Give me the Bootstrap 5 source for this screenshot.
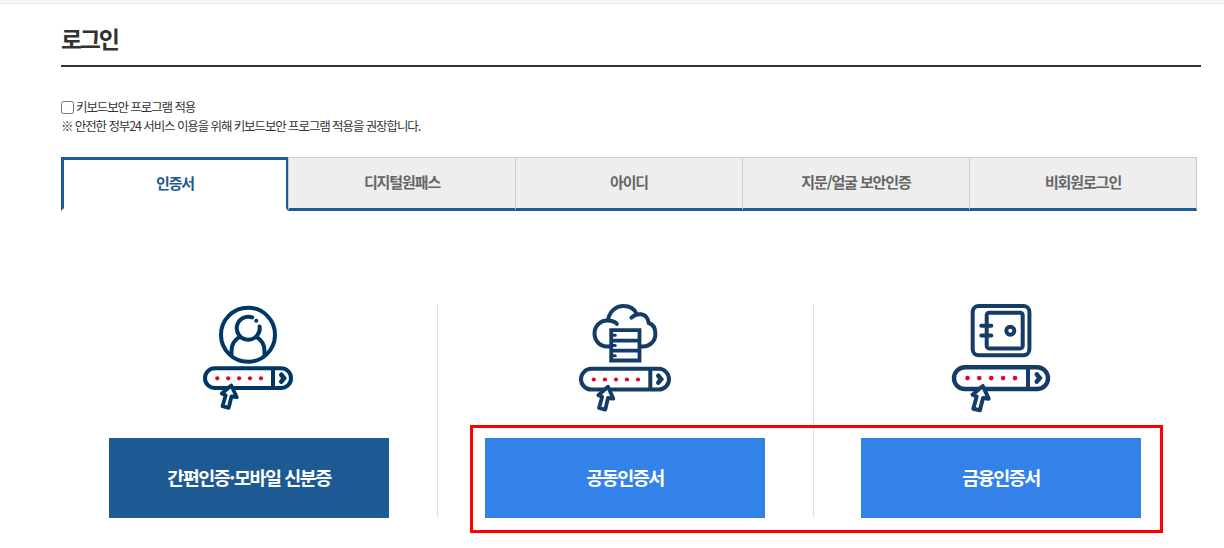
<!DOCTYPE html>
<html lang="ko">

<head>
    <meta charset="UTF-8">
    <meta name="viewport" content="width=device-width, initial-scale=1, shrink-to-fit=no">
    <link rel="stylesheet" href="https://cdn.jsdelivr.net/npm/bootstrap@5.3.0/dist/css/bootstrap.min.css">
    <style>
        body {
            font-family: "Noto Sans CJK KR", sans-serif;
            font-size: 12.5px;
            letter-spacing: -1.1px;
            color: #333;
        }
        .top-strip {
            height: 4px;
            background: #f5f6fa;
            border-bottom: 1px solid #e6e7ea;
        }
        .page {
            width: 1140px;
            margin-left: 61px;
            padding-bottom: 30px;
        }
        .page-title {
            height: 63px;
            padding-top: 17px;
            font-size: 23px;
            line-height: 35px;
            letter-spacing: -2.3px;
            border-bottom: 2px solid #333;
        }
        .keyboard {
            margin-top: 30px;
            line-height: 19px;
        }
        .keyboard input {
            width: 13px;
            height: 13px;
            margin: 2px 2px 0 0;
        }
        .login-tabs {
            width: 1136px;
            margin-top: 22px;
        }
        .login-tabs .nav-item {
            width: 227px;
        }
        .login-tabs .nav-item:last-child {
            width: 228px;
        }
        .login-tabs .nav-link {
            height: 54px;
            padding: 0;
            font-size: 15px;
            line-height: 48px;
            font-weight: bold;
            text-align: center;
            color: #666;
            background: #eee;
            border: 1px solid #ccc;
            border-width: 1px 0 3px 1px;
            border-bottom-color: #1d5a94;
            border-radius: 0;
        }
        .login-tabs .nav-item:last-child .nav-link {
            border-right-width: 1px;
        }
        .login-tabs .nav-link.active {
            line-height: 46px;
            color: #1d5a94;
            background: #fff;
            border: 3px solid #1d5a94;
            border-right-width: 2px;
            border-bottom-color: #fff;
        }
        .methods {
            width: 1128px;
            margin-top: 93px;
        }
        .method {
            width: 376px;
            height: 214px;
        }
        .method + .method {
            border-left: 1px solid #e1e1e1;
            padding-right: 1px;
        }
        .method svg {
            width: 120px;
            height: 109px;
            fill: none;
            stroke: #143c66;
            stroke-width: 4;
        }
        .method:first-child svg {
            stroke: #003764;
        }
        .method .dots {
            fill: #e4032e;
            stroke: none;
        }
        .btn-method {
            width: 280px;
            height: 80px;
            margin-top: 25px;
            padding: 0;
            font-size: 18.5px;
            line-height: 78px;
            font-weight: bold;
            letter-spacing: -1.5px;
            border: 0;
            border-radius: 0;
            color: #fff;
            background: #3382e9;
        }
        .btn-simple {
            background: #1d5a94;
        }
        /* marks the two certificate buttons */
        .highlight {
            left: 409px;
            top: 121px;
            width: 693px;
            height: 108px;
            border: 3px solid #f00;
            pointer-events: none;
        }
    </style>
    <title>로그인</title>
</head>

<body>

    <div class="top-strip"></div>

    <main class="page">
        <h1 class="page-title fw-bold mb-0">로그인</h1>

        <div class="keyboard">
            <label class="d-flex align-items-center"><input type="checkbox">키보드보안 프로그램 적용</label>
            <div>※ 안전한 정부24 서비스 이용을 위해 키보드보안 프로그램 적용을 권장합니다.</div>
        </div>

        <ul class="login-tabs nav">
            <li class="nav-item"><a class="nav-link active" href="#">인증서</a></li>
            <li class="nav-item"><a class="nav-link" href="#">디지털원패스</a></li>
            <li class="nav-item"><a class="nav-link" href="#">아이디</a></li>
            <li class="nav-item"><a class="nav-link" href="#">지문/얼굴 보안인증</a></li>
            <li class="nav-item"><a class="nav-link" href="#">비회원로그인</a></li>
        </ul>

        <div class="methods d-flex position-relative">
            <div class="method d-flex flex-column align-items-center">
                <svg viewBox="-1 9 120 109">
                    <circle cx="58" cy="39.7" r="27" />
                    <path d="M62.2 22.4A11.5 11.5 0 1 0 69.6 31.5" stroke-linecap="round" />
                    <path d="M49.5 42C43.5 45.5 41.5 50 41.5 56V61M66.5 42C72.5 45.5 74.5 50 74.5 56V61" />
                    <circle cx="66.3" cy="25.7" r="2" fill="#003764" stroke="none" />
                    <rect x="15" y="73.3" width="86" height="19.7" rx="9.85" />
                    <path d="M83 73V93" />
                    <path d="M91.3 79.8L94 83.2L91.3 86.6" stroke-width="4.6" stroke-linecap="round" />
                    <g class="dots">
                        <circle cx="27.3" cy="83.3" r="2.1" />
                        <circle cx="38.2" cy="83.3" r="2.1" />
                        <circle cx="49.1" cy="83.3" r="2.1" />
                        <circle cx="60" cy="83.3" r="2.1" />
                        <circle cx="71" cy="83.3" r="2.1" />
                    </g>
                    <path d="M41.3 90.5L31.8 98.5L35.7 100.2L32.5 111.2L38.7 112.8L41.5 101.5L46.8 102.2Z" fill="#fff" stroke-width="3.8" stroke-linejoin="round" />
                </svg>
                <a class="btn btn-method btn-simple" href="#">간편인증·모바일 신분증</a>
            </div>
            <div class="method d-flex flex-column align-items-center">
                <svg viewBox="0 9 120 109">
                    <path d="M45 51.5H42C34 51.5 29.5 45 29.5 38.5C29.5 31 35.5 25.5 42 25.5C46 25.5 50 26.5 51.8 28.8" stroke-linecap="round" />
                    <path d="M43 25.5C44 16.5 51 11 58.5 11C64.5 11 69.5 14 71.8 19" />
                    <path d="M66.5 22.7C71 18 82 16.5 83.8 28C88.5 29.5 90.4 34.5 90.4 39C90.4 46.5 84.5 51.5 78 51.5H76" stroke-linecap="round" />
                    <path d="M46.2 35.2H74.5V65.5H46.2ZM46 45.7H75M46 55.7H75" stroke-width="3.8" />
                    <path d="M47 40.3H50.3M47 50.5H50.3M47 60.7H50.3" stroke-width="3" stroke-linecap="round" />
                    <rect x="16" y="73.8" width="88" height="20.7" rx="10.35" />
                    <path d="M85.3 74V94" />
                    <path d="M93.3 80.8L96.1 84.2L93.3 87.6" stroke-width="4.6" stroke-linecap="round" />
                    <g class="dots">
                        <circle cx="28.8" cy="84.5" r="2.1" />
                        <circle cx="39.9" cy="84.5" r="2.1" />
                        <circle cx="51" cy="84.5" r="2.1" />
                        <circle cx="62" cy="84.5" r="2.1" />
                        <circle cx="73" cy="84.5" r="2.1" />
                    </g>
                    <path d="M43 91.8L33.3 100.3L37.2 101.8L34 113L40.3 114.6L43 103L48.3 103.7Z" fill="#fff" stroke-width="3.8" stroke-linejoin="round" />
                </svg>
                <a class="btn btn-method" href="#">공동인증서</a>
            </div>
            <div class="method d-flex flex-column align-items-center">
                <svg viewBox="1 9 120 109">
                    <rect x="32.7" y="11" width="56.7" height="49.3" rx="6" />
                    <rect x="46.7" y="17.7" width="36" height="35.7" rx="2.5" />
                    <path d="M41.3 30.7H51.3M41.3 40.4H51.3" stroke-linecap="round" />
                    <circle cx="70.3" cy="35.7" r="4" />
                    <rect x="14" y="72.3" width="94" height="21.7" rx="10.85" stroke-width="4.4" />
                    <path d="M88 73V94" />
                    <path d="M96.8 79.4L99.7 83L96.8 86.6" stroke-width="4.6" stroke-linecap="round" />
                    <g class="dots">
                        <circle cx="27.5" cy="83.1" r="2.3" />
                        <circle cx="39.3" cy="83.1" r="2.3" />
                        <circle cx="51.2" cy="83.1" r="2.3" />
                        <circle cx="63.1" cy="83.1" r="2.3" />
                        <circle cx="75" cy="83.1" r="2.3" />
                    </g>
                    <path d="M42.8 91L32.5 99.7L36.7 101.5L33.3 113.8L39.9 115.3L43 103L48.7 103.7Z" fill="#fff" stroke-linejoin="round" />
                </svg>
                <a class="btn btn-method" href="#">금융인증서</a>
            </div>
            <div class="highlight position-absolute"></div>
        </div>
    </main>

    <script src="https://cdn.jsdelivr.net/npm/bootstrap@5.3.0/dist/js/bootstrap.bundle.min.js"></script>
</body>

</html>
